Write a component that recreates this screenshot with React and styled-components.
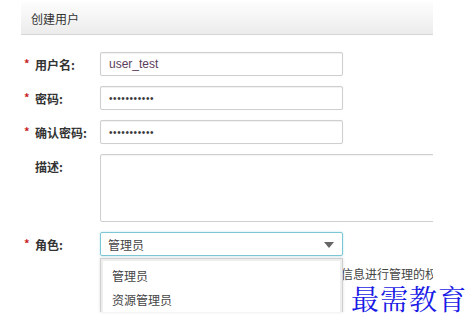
import React from "react"
import styled, { createGlobalStyle } from "styled-components"

const GlobalStyle = createGlobalStyle`
  * {
    box-sizing: border-box;
    margin: 0;
    padding: 0;
  }
  body {
    background: #fff;
    font-family: "Liberation Sans", "Noto Sans CJK SC", sans-serif;
    font-size: 12px;
    color: #333;
  }
`

const Screen = styled.div`
  position: relative;
  width: 475px;
  height: 330px;
  overflow: hidden;
  padding: 2px 0 0 21px;
`

const Panel = styled.div`
  width: 412px;
  height: 328px;
  overflow: hidden;
`

const Header = styled.div`
  display: flex;
  align-items: center;
  height: 33px;
  padding-left: 10px;
  background: linear-gradient(#fdfdfd, #ececec);
  border-bottom: 1px solid #d6d6d6;
  font-family: "Noto Sans CJK SC", sans-serif;
  font-size: 12px;
  color: #333;
`

const Form = styled.div`
  display: flex;
  flex-direction: column;
  gap: 10px;
  padding-top: 17px;
`

const Row = styled.div`
  display: grid;
  grid-template-columns: 79px 1fr;
  align-items: start;
`

const Label = styled.div`
  display: flex;
  align-items: center;
  height: 24px;
  padding-left: ${({ plain }) => (plain ? "14px" : "3px")};
  font-family: "Noto Sans CJK SC", sans-serif;
  font-weight: 700;
  font-size: 12px;
  color: #333;
  white-space: nowrap;
`

const Star = styled.span`
  width: 11px;
  color: #c81e1e;
  font-size: 11px;
  font-weight: 700;
  line-height: 1;
  margin-top: -2px;
`

const Input = styled.input`
  display: block;
  width: 243px;
  height: 24px;
  padding: 0 8px;
  border: 1px solid #cfcfcf;
  border-radius: 2px;
  box-shadow: inset 0 1px 1px rgba(0, 0, 0, 0.06), 0 0 1px rgba(0, 0, 0, 0.08);
  font-family: "Liberation Sans", "Noto Sans CJK SC", sans-serif;
  font-size: ${({ type }) => (type === "password" ? "10px" : "12px")};
  letter-spacing: ${({ type }) => (type === "password" ? "0.6px" : "0")};
  color: ${({ type }) => (type === "password" ? "#3a3a3a" : "#5a3d5c")};
  outline: none;
  background: #fff;
`

const TextArea = styled.div`
  width: 360px;
  height: 68px;
  border: 1px solid #cfcfcf;
  border-radius: 2px;
  box-shadow: inset 0 1px 1px rgba(0, 0, 0, 0.05);
`

const Field = styled.div`
  position: relative;
  display: flex;
  flex-direction: column;
`

const Select = styled.div`
  display: flex;
  align-items: center;
  justify-content: space-between;
  width: 243px;
  height: 24px;
  padding: 0 8px 0 7px;
  border: 1px solid #7cc6d6;
  border-radius: 2px;
  box-shadow: 0 0 2px rgba(102, 190, 214, 0.5);
  font-family: "Noto Sans CJK SC", sans-serif;
  font-size: 12px;
  color: #444;
`

const Caret = styled.span`
  width: 0;
  height: 0;
  border-left: 5px solid transparent;
  border-right: 5px solid transparent;
  border-top: 6px solid #666;
  margin-top: 2px;
`

const Hint = styled.div`
  margin: 11px 0 0 205px;
  height: 14px;
  line-height: 14px;
  font-family: "Noto Sans CJK SC", sans-serif;
  font-size: 12px;
  color: #444;
  white-space: nowrap;
`

const Menu = styled.ul`
  position: absolute;
  top: 26px;
  left: 0;
  width: 243px;
  height: 54px;
  list-style: none;
  padding-top: 5px;
  background: #fff;
  border: 1px solid #cfcfcf;
  border-bottom: none;
  box-shadow: 0 0 3px rgba(0, 0, 0, 0.12), inset 2px 0 0 #eee, inset -2px 0 0 #eee, inset 0 2px 0 #eee;
`

const Option = styled.li`
  height: 24px;
  line-height: 24px;
  padding-left: 11px;
  font-family: "Noto Sans CJK SC", sans-serif;
  font-size: 12px;
  color: #444;
`

const Watermark = styled.div`
  position: absolute;
  left: 351px;
  top: 284px;
  font-family: "Noto Serif CJK SC", "AR PL UKai CN", "Noto Sans CJK SC", serif;
  font-size: 28px;
  line-height: 28px;
  letter-spacing: 1px;
  color: #1a1ae6;
  font-weight: 400;
`

const roles = ["管理员", "资源管理员"]

export default function App() {
  return (
    <Screen>
      <GlobalStyle />
      <Panel>
        <Header>创建用户</Header>
        <Form>
          <Row>
            <Label>
              <Star>*</Star>用户名:
            </Label>
            <Input readOnly defaultValue="user_test" />
          </Row>
          <Row>
            <Label>
              <Star>*</Star>密码:
            </Label>
            <Input readOnly type="password" defaultValue="12345678901" />
          </Row>
          <Row>
            <Label>
              <Star>*</Star>确认密码:
            </Label>
            <Input readOnly type="password" defaultValue="12345678901" />
          </Row>
          <Row>
            <Label plain>描述:</Label>
            <TextArea />
          </Row>
          <Row>
            <Label>
              <Star>*</Star>角色:
            </Label>
            <Field>
              <Select>
                管理员
                <Caret />
              </Select>
              <Hint>对用户信息进行管理的权限</Hint>
              <Menu>
                {roles.map((r) => (
                  <Option key={r}>{r}</Option>
                ))}
              </Menu>
            </Field>
          </Row>
        </Form>
      </Panel>
      <Watermark>最需教育</Watermark>
    </Screen>
  )
}
